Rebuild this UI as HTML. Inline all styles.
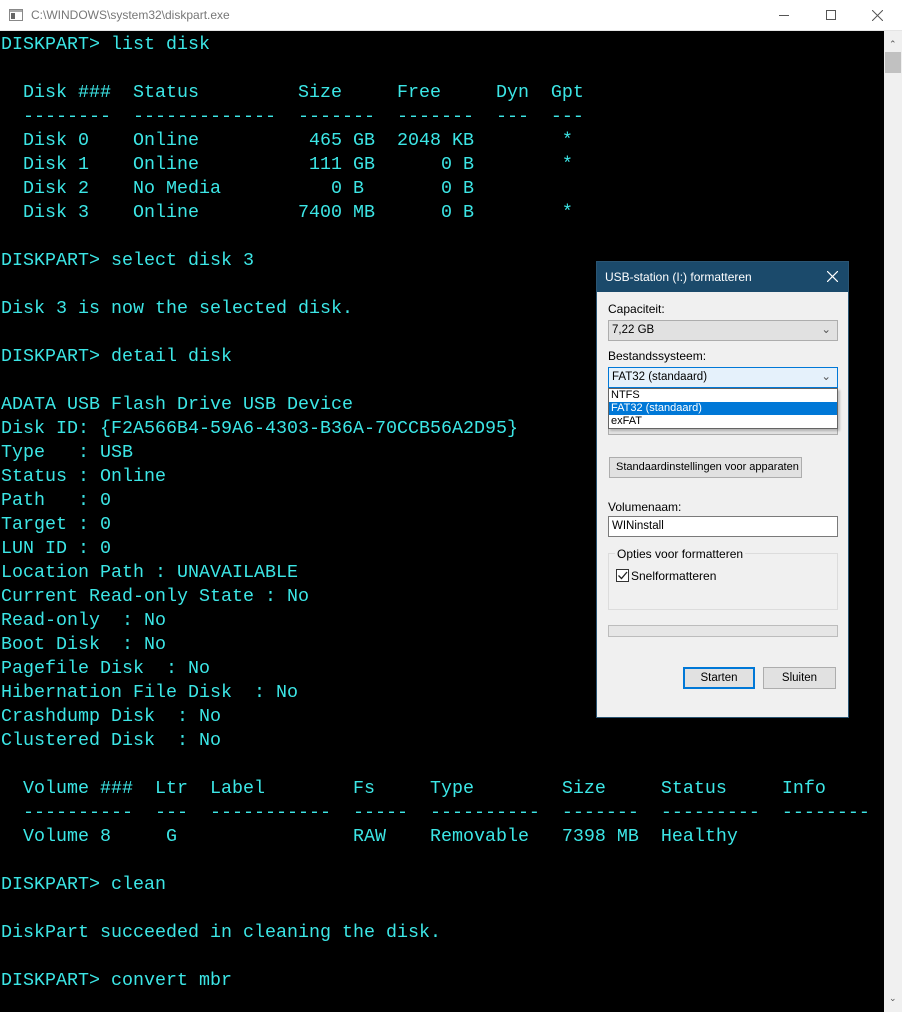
<!DOCTYPE html>
<html><head><meta charset="utf-8"><style>
*{margin:0;padding:0;box-sizing:border-box}
body{width:902px;height:1012px;overflow:hidden;background:#fff;position:relative;font-family:"Liberation Sans",sans-serif}
.tb{position:absolute;left:0;top:0;width:902px;height:31px;background:#fff;border-bottom:1px solid #e5e5e5}
.con{position:absolute;left:0;top:31px;width:884px;height:981px;background:#000}
pre{position:absolute;left:1px;top:33px;font-family:"Liberation Mono",monospace;font-size:18.33px;line-height:24px;color:#3ce6e6;white-space:pre}
.sb{position:absolute;left:884px;top:31px;width:18px;height:981px;background:#f0f0f0}
.a{position:absolute;font-size:12px;white-space:nowrap}
.dlg{position:absolute;left:596px;top:261px;width:253px;height:457px;background:#f0f0f0;border:1px solid #2a5573}
.dt{position:absolute;left:0;top:0;width:251px;height:30px;background:#1b4a6b;color:#fff;font-size:12px;line-height:30px;padding-left:8px}
.box{position:absolute;font-size:11.5px;line-height:18px;padding-left:3px;white-space:nowrap}
</style></head><body>
<div class="tb">
 <svg style="position:absolute;left:9px;top:9px" width="14" height="12"><rect x="0.5" y="0.5" width="13" height="11" fill="#fff" stroke="#888"/><rect x="1" y="1" width="12" height="2" fill="#aaa"/><rect x="2" y="4" width="4" height="6" fill="#666"/></svg>
 <div class="a" style="left:31px;top:8px;color:#777;font-size:12px">C:\WINDOWS\system32\diskpart.exe</div>
 <div style="position:absolute;left:779px;top:15px;width:10px;height:1px;background:#555"></div>
 <div style="position:absolute;left:826px;top:10px;width:10px;height:10px;border:1px solid #555"></div>
 <svg style="position:absolute;left:872px;top:10px" width="11" height="11"><path d="M0 0L11 11M11 0L0 11" stroke="#555" stroke-width="1"/></svg>
</div>
<div class="con"></div>
<pre>DISKPART&gt; list disk

  Disk ###  Status         Size     Free     Dyn  Gpt
  --------  -------------  -------  -------  ---  ---
  Disk 0    Online          465 GB  2048 KB        *
  Disk 1    Online          111 GB      0 B        *
  Disk 2    No Media          0 B       0 B
  Disk 3    Online         7400 MB      0 B        *

DISKPART&gt; select disk 3

Disk 3 is now the selected disk.

DISKPART&gt; detail disk

ADATA USB Flash Drive USB Device
Disk ID: {F2A566B4-59A6-4303-B36A-70CCB56A2D95}
Type   : USB
Status : Online
Path   : 0
Target : 0
LUN ID : 0
Location Path : UNAVAILABLE
Current Read-only State : No
Read-only  : No
Boot Disk  : No
Pagefile Disk  : No
Hibernation File Disk  : No
Crashdump Disk  : No
Clustered Disk  : No

  Volume ###  Ltr  Label        Fs     Type        Size     Status     Info
  ----------  ---  -----------  -----  ----------  -------  ---------  --------
  Volume 8     G                RAW    Removable   7398 MB  Healthy

DISKPART&gt; clean

DiskPart succeeded in cleaning the disk.

DISKPART&gt; convert mbr</pre>
<div class="sb">
 <div style="position:absolute;left:5px;top:8px;font-size:9px;color:#555">&#8963;</div>
 <div style="position:absolute;left:1px;top:21px;width:16px;height:21px;background:#c1c1c1"></div>
 <div style="position:absolute;left:5px;top:962px;font-size:9px;color:#555">&#8964;</div>
</div>
<div class="dlg">
 <div class="dt">USB-station (I:) formatteren<svg style="position:absolute;left:230px;top:9px" width="11" height="11"><path d="M0 0L11 11M11 0L0 11" stroke="#fff" stroke-width="1.2"/></svg></div>
</div>
<div class="a" style="left:608px;top:302px">Capaciteit:</div>
<div class="box" style="left:608px;top:320px;width:230px;height:21px;background:#e1e1e1;border:1px solid #adadad;line-height:19px">7,22 GB<span style="position:absolute;right:6px;top:0;color:#555">&#8964;</span></div>
<div class="a" style="left:608px;top:349px">Bestandssysteem:</div>
<div class="box" style="left:608px;top:428px;width:230px;height:7px;background:#e1e1e1;border:1px solid #adadad"></div>
<div class="box" style="left:608px;top:367px;width:230px;height:21px;background:#e5f1fb;border:1px solid #0078d7;line-height:19px">FAT32 (standaard)<span style="position:absolute;right:6px;top:0;color:#555">&#8964;</span></div>
<div style="position:absolute;left:608px;top:388px;width:230px;height:41px;background:#fff;border:1px solid #646464;font-size:11px;line-height:13px;box-shadow:2px 2px 2px rgba(0,0,0,.2)">
 <div style="padding-left:2px;height:13px">NTFS</div>
 <div style="padding-left:2px;height:13px;background:#0078d7;color:#fff">FAT32 (standaard)</div>
 <div style="padding-left:2px;height:13px">exFAT</div>
</div>
<div class="box" style="left:609px;top:457px;width:193px;height:21px;background:#e1e1e1;border:1px solid #adadad;padding-left:6px;font-size:11px;line-height:19px">Standaardinstellingen voor apparaten</div>
<div class="a" style="left:608px;top:500px">Volumenaam:</div>
<div class="box" style="left:608px;top:516px;width:230px;height:21px;background:#fff;border:1px solid #7a7a7a;line-height:19px">WINinstall</div>
<div style="position:absolute;left:608px;top:553px;width:230px;height:57px;border:1px solid #dcdcdc"></div>
<div class="a" style="left:615px;top:547px;background:#f0f0f0;padding:0 2px">Opties voor formatteren</div>
<div style="position:absolute;left:616px;top:569px;width:13px;height:13px;border:1px solid #333;background:#fff"><svg width="11" height="11" style="position:absolute;left:0;top:0"><path d="M1.5 5.5L4.5 8.5L10 2" stroke="#222" stroke-width="1.3" fill="none"/></svg></div>
<div class="a" style="left:631px;top:569px">Snelformatteren</div>
<div style="position:absolute;left:608px;top:625px;width:230px;height:12px;background:#e6e6e6;border:1px solid #bcbcbc"></div>
<div class="box" style="left:683px;top:667px;width:72px;height:22px;background:#e1e1e1;border:2px solid #0078d7;text-align:center;padding:0;line-height:18px">Starten</div>
<div class="box" style="left:763px;top:667px;width:73px;height:22px;background:#e1e1e1;border:1px solid #adadad;text-align:center;padding:0;line-height:20px">Sluiten</div>
</body></html>
